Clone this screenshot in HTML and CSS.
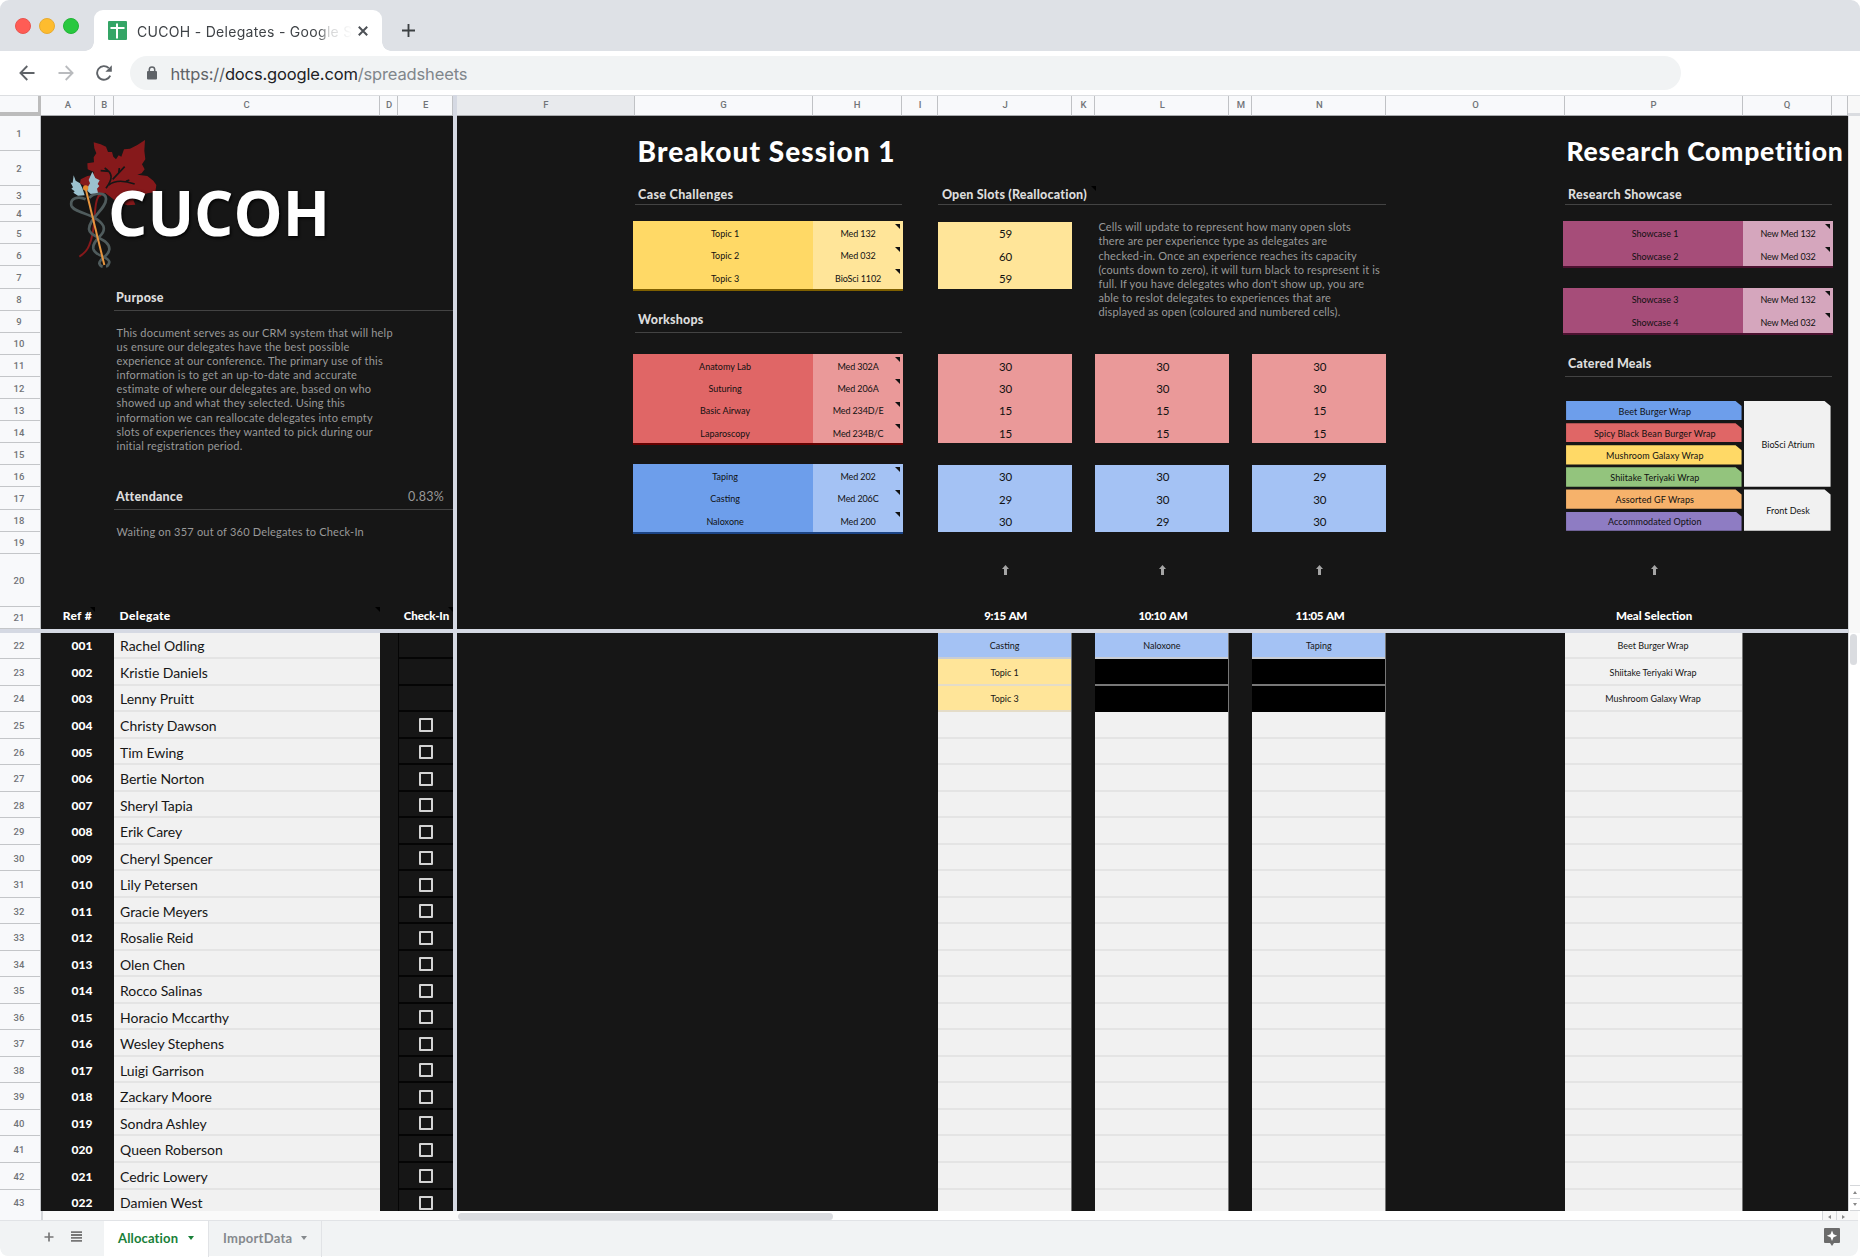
FILE: index.html
```html
<!DOCTYPE html>
<html lang="en">
<head>
<meta charset="utf-8">
<title>CUCOH - Delegates - Google Sheets</title>
<link rel="stylesheet" href="styles.css">
</head>
<body>
<div class="window">
  <header class="tabstrip">
    <div class="lights"><i class="close"></i><i class="min"></i><i class="max"></i></div>
    <div class="tab">
      <svg class="favicon" viewBox="0 0 19 19"><rect width="19" height="19" rx="1" fill="#34a566"/><path d="M9 2.5v15M2.5 7h14" stroke="#fff" stroke-width="2" fill="none"/></svg>
      <span class="tab-title">CUCOH - Delegates - Google S</span>
      <svg class="x" viewBox="0 0 10 10"><path d="M.8.8l8.4 8.4M9.2.8L.8 9.2" stroke="#4d5156" stroke-width="2"/></svg>
    </div>
    <svg class="plus" viewBox="0 0 14 14"><path d="M7 0v14M0 7h14" stroke="#3c4043" stroke-width="2"/></svg>
  </header>
  <nav class="toolbar">
    <svg class="nav" viewBox="0 0 16 16"><path d="M15.5 8H1.5M8.3 1L1.4 8l6.9 7" fill="none" stroke="#5f6368" stroke-width="1.8"/></svg>
    <svg class="nav" viewBox="0 0 16 16"><path d="M.5 8h14M7.7 1l6.9 7-6.9 7" fill="none" stroke="#b9bbbe" stroke-width="1.8"/></svg>
    <svg class="nav" viewBox="0 0 16 16"><path d="M14.2 10.6A6.8 6.8 0 1 1 12.8 3.2" fill="none" stroke="#5f6368" stroke-width="1.9"/><path d="M15.8.3v6.4H9.4z" fill="#5f6368"/></svg>
    <div class="omnibox">
      <svg class="lock" viewBox="0 0 10 14"><path d="M2.3 6V3.6a2.7 2.7 0 0 1 5.4 0V6" fill="none" stroke="#5f6368" stroke-width="1.5"/><rect y="5" width="10" height="8.6" rx="1" fill="#5f6368"/></svg>
      <span class="url"><span>https://</span><b>docs.google.com</b><em>/spreadsheets</em></span>
    </div>
  </nav>

  <main class="sheet">
    <div class="colheads">
      <span class="corner"></span><span>A</span><span>B</span><span>C</span><span>D</span><span>E</span><span></span><span class="sel">F</span><span>G</span><span>H</span><span>I</span><span>J</span><span>K</span><span>L</span><span>M</span><span>N</span><span>O</span><span>P</span><span>Q</span><span></span><span class="track"></span>
    </div>
    <div class="rowheads">
      <span>1</span><span>2</span><span>3</span><span>4</span><span>5</span><span>6</span><span>7</span><span>8</span><span>9</span><span>10</span><span>11</span><span>12</span><span>13</span><span>14</span><span>15</span><span>16</span><span>17</span><span>18</span><span>19</span><span>20</span><span>21</span><span class="gap"></span><span>22</span><span>23</span><span>24</span><span>25</span><span>26</span><span>27</span><span>28</span><span>29</span><span>30</span><span>31</span><span>32</span><span>33</span><span>34</span><span>35</span><span>36</span><span>37</span><span>38</span><span>39</span><span>40</span><span>41</span><span>42</span><span>43</span>
    </div>

    <svg class="logo" viewBox="0 0 870 450">
      <path fill="#86191b" d="M131 37L152 43 168 50 174 66 186 66 190 80 198 88 206 76 214 80 222 58 240 56 262 45 285 30 283 62 286 88 276 103 284 118 275 130 262 134 292 138 310 152 319 165 316 186 292 190 250 210 256 224 232 226 200 215 165 188 150 200 90 160 92 148 112 138 128 136 132 126 113 118 112 100 132 97 131 82 139 70 133 55z"/>
      <path d="M150 192C126 220 142 290 118 345C112 362 100 372 88 380" fill="none" stroke="#86191b" stroke-width="6"/>
      <path d="M168 175C190 145 188 130 164 114M152 122l26 2M188 148L224 110M206 130l2-16M176 165C195 150 225 152 254 162M228 154l10-4" fill="none" stroke="#161616" stroke-width="5"/>
      <path d="M107 208C85 198 60 204 64 226C70 250 140 250 160 288C170 318 126 325 130 356C135 380 176 378 178 396Q176 408 168 409M118 204C130 187 167 185 168 206C170 236 116 265 117 298C118 322 180 325 178 358C176 380 148 384 148 400Q150 408 158 410" fill="none" stroke="#4f5b5c" stroke-width="8"/>
      <path d="M107 176L163 405" stroke="#e8963f" stroke-width="6"/>
      <path fill="#9bc1ce" d="M71 136L77 152 90 160 97 174 104 196 84 197 70 188 74 184 64 176 69 172 62 158 68 158z"/>
      <path fill="#9bc1ce" d="M127 125L136 144 149 151 143 162 148 168 141 176 144 188 122 192 112 182 114 170 120 160 116 150z"/>
      <circle cx="107" cy="174" r="8" fill="#e58a2e"/>
      <text class="wordmark" x="174" y="318" textLength="666" lengthAdjust="spacingAndGlyphs">CUCOH</text>
    </svg>

    <h2 class="h purpose">Purpose</h2>
    <p class="para purpose-text">This document serves as our CRM system that will help<br>us ensure our delegates have the best possible<br>experience at our conference. The primary use of this<br>information is to get an up-to-date and accurate<br>estimate of where our delegates are, based on who<br>showed up and what they selected. Using this<br>information we can reallocate delegates into empty<br>slots of experiences they wanted to pick during our<br>initial registration period.</p>
    <h2 class="h attendance">Attendance <span>0.83%</span></h2>
    <p class="para waiting">Waiting on 357 out of 360 Delegates to Check-In</p>
    <div class="label ref note dark">Ref #</div>
    <div class="label delegate note dark">Delegate</div>
    <div class="label checkin note dark">Check-In</div>

    <h1 class="breakout">Breakout Session 1</h1>
    <h2 class="h cases">Case Challenges</h2>
    <h2 class="h slots"><span class="note dark">Open Slots (Reallocation)</span></h2>
    <div class="card yellow case-card"><span>Topic 1</span><span class="note">Med 132</span><span>Topic 2</span><span class="note">Med 032</span><span>Topic 3</span><span class="note">BioSci 1102</span></div>
    <div class="count yellow c-j r-case"><span>59</span><span>60</span><span>59</span></div>
    <p class="para slots-text">Cells will update to represent how many open slots<br>there are per experience type as delegates are<br>checked-in. Once an experience reaches its capacity<br>(counts down to zero), it will turn black to respresent it is<br>full. If you have delegates who don't show up, you are<br>able to reslot delegates to experiences that are<br>displayed as open (coloured and numbered cells).</p>
    <h2 class="h workshops">Workshops</h2>
    <div class="card red red-card"><span>Anatomy Lab</span><span class="note">Med 302A</span><span>Suturing</span><span class="note">Med 206A</span><span>Basic Airway</span><span class="note">Med 234D/E</span><span>Laparoscopy</span><span class="note">Med 234B/C</span></div>
    <div class="count red c-j r-red"><span>30</span><span>30</span><span>15</span><span>15</span></div>
    <div class="count red c-l r-red"><span>30</span><span>30</span><span>15</span><span>15</span></div>
    <div class="count red c-n r-red"><span>30</span><span>30</span><span>15</span><span>15</span></div>
    <div class="card blue blue-card"><span>Taping</span><span class="note">Med 202</span><span>Casting</span><span class="note">Med 206C</span><span>Naloxone</span><span class="note">Med 200</span></div>
    <div class="count blue c-j r-blue"><span>30</span><span>29</span><span>30</span></div>
    <div class="count blue c-l r-blue"><span>30</span><span>30</span><span>29</span></div>
    <div class="count blue c-n r-blue"><span>29</span><span>30</span><span>30</span></div>

    <svg class="arrow c-j" viewBox="0 0 7 10"><path d="M3.5 0L7 4H5v6H2V4H0z"/></svg>
    <svg class="arrow c-l" viewBox="0 0 7 10"><path d="M3.5 0L7 4H5v6H2V4H0z"/></svg>
    <svg class="arrow c-n" viewBox="0 0 7 10"><path d="M3.5 0L7 4H5v6H2V4H0z"/></svg>
    <svg class="arrow c-p" viewBox="0 0 7 10"><path d="M3.5 0L7 4H5v6H2V4H0z"/></svg>
    <div class="label mid time c-j">9:15 AM</div>
    <div class="label mid time c-l">10:10 AM</div>
    <div class="label mid time c-n">11:05 AM</div>
    <div class="label mid c-p">Meal Selection</div>

    <h1 class="research">Research Competition</h1>
    <h2 class="h showcase">Research Showcase</h2>
    <div class="card plum show-a"><span>Showcase 1</span><span class="note">New Med 132</span><span>Showcase 2</span><span class="note">New Med 032</span></div>
    <div class="card plum show-b"><span>Showcase 3</span><span class="note">New Med 132</span><span>Showcase 4</span><span class="note">New Med 032</span></div>
    <h2 class="h catered">Catered Meals</h2>
    <div class="meals">
      <span class="m-blue">Beet Burger Wrap</span><span class="m-red">Spicy Black Bean Burger Wrap</span><span class="m-yellow">Mushroom Galaxy Wrap</span><span class="m-green">Shiitake Teriyaki Wrap</span><span class="m-orange">Assorted GF Wraps</span><span class="m-purple">Accommodated Option</span>
    </div>
    <div class="places"><span class="atrium">BioSci Atrium</span><span class="desk">Front Desk</span></div>

    <div class="data refs"><span>001</span><span>002</span><span>003</span><span>004</span><span>005</span><span>006</span><span>007</span><span>008</span><span>009</span><span>010</span><span>011</span><span>012</span><span>013</span><span>014</span><span>015</span><span>016</span><span>017</span><span>018</span><span>019</span><span>020</span><span>021</span><span>022</span></div>
    <div class="data names"><span>Rachel Odling</span><span>Kristie Daniels</span><span>Lenny Pruitt</span><span>Christy Dawson</span><span>Tim Ewing</span><span>Bertie Norton</span><span>Sheryl Tapia</span><span>Erik Carey</span><span>Cheryl Spencer</span><span>Lily Petersen</span><span>Gracie Meyers</span><span>Rosalie Reid</span><span>Olen Chen</span><span>Rocco Salinas</span><span>Horacio Mccarthy</span><span>Wesley Stephens</span><span>Luigi Garrison</span><span>Zackary Moore</span><span>Sondra Ashley</span><span>Queen Roberson</span><span>Cedric Lowery</span><span>Damien West</span></div>
    <div class="data checks"><span></span><span></span><span></span><span><i></i></span><span><i></i></span><span><i></i></span><span><i></i></span><span><i></i></span><span><i></i></span><span><i></i></span><span><i></i></span><span><i></i></span><span><i></i></span><span><i></i></span><span><i></i></span><span><i></i></span><span><i></i></span><span><i></i></span><span><i></i></span><span><i></i></span><span><i></i></span><span><i></i></span></div>
    <div class="data picks c-j"><span class="p-blue">Casting</span><span class="p-yellow">Topic 1</span><span class="p-yellow">Topic 3</span><span></span><span></span><span></span><span></span><span></span><span></span><span></span><span></span><span></span><span></span><span></span><span></span><span></span><span></span><span></span><span></span><span></span><span></span><span></span></div>
    <div class="data picks c-l"><span class="p-blue">Naloxone</span><span class="p-black"></span><span class="p-black"></span><span></span><span></span><span></span><span></span><span></span><span></span><span></span><span></span><span></span><span></span><span></span><span></span><span></span><span></span><span></span><span></span><span></span><span></span><span></span></div>
    <div class="data picks c-n"><span class="p-blue">Taping</span><span class="p-black"></span><span class="p-black"></span><span></span><span></span><span></span><span></span><span></span><span></span><span></span><span></span><span></span><span></span><span></span><span></span><span></span><span></span><span></span><span></span><span></span><span></span><span></span></div>
    <div class="data picks c-p"><span>Beet Burger Wrap</span><span>Shiitake Teriyaki Wrap</span><span>Mushroom Galaxy Wrap</span><span></span><span></span><span></span><span></span><span></span><span></span><span></span><span></span><span></span><span></span><span></span><span></span><span></span><span></span><span></span><span></span><span></span><span></span><span></span></div>

    <div class="freeze-h"></div>
    <div class="freeze-v"></div>
    <div class="vscroll-top"></div>
    <div class="vscroll">
      <div class="vthumb"></div>
      <svg class="vbtn" viewBox="0 0 10 26"><path d="M0 .5h10M0 13.5h10M0 25.5h10" stroke="#d5d7da"/><path d="M3 9l2-3 2 3zM3 18l2 3 2-3z" fill="#888"/></svg>
    </div>
  </main>

  <div class="hscroll"><span class="h-left"></span><span class="h-mid"></span><span class="hthumb"></span>
    <svg class="hbtn" viewBox="0 0 36 9"><rect width="36" height="9" fill="#f8f8f8"/><path d="M.5 0v9M14.5 0v9" stroke="#d5d7da"/><path d="M9 4l-3 2 3 2zM20 4l3 2-3 2z" fill="#888"/></svg></div>
  <footer class="sheetbar">
    <svg class="add" viewBox="0 0 10 10"><path d="M5 .5v9M.5 5h9" stroke="#777" stroke-width="1.7"/></svg>
    <svg class="list" viewBox="0 0 11 11"><path d="M0 1.2h11M0 4h11M0 6.9h11M0 9.8h11" stroke="#777" stroke-width="1.8"/></svg>
    <div class="stab active">Allocation<i></i></div>
    <div class="stab">ImportData<i></i></div>
    <svg class="explore" viewBox="0 0 16 18"><path d="M1 0h14a1 1 0 0 1 1 1v13a1 1 0 0 1-1 1h-5l-2 3-2-3H1a1 1 0 0 1-1-1V1a1 1 0 0 1 1-1z" fill="#6b6b6b"/><path d="M8 2.5l1.5 3.7 3.7 1.5-3.7 1.5L8 13 6.5 9.2 2.8 7.7l3.7-1.5z" fill="#fff"/></svg>
  </footer>
</div>
</body>
</html>
```
FILE: styles.css
```css
* { box-sizing: border-box; }
body { margin: 0; background: #fff; font-family: Lato, "Open Sans", sans-serif; }
h1, h2, p { margin: 0; }
.window { width: 1860px; height: 1257px; overflow: hidden; display: flex; flex-direction: column; border-radius: 9px; background: #fff; }

/* browser chrome */
.tabstrip { height: 51px; flex: none; background: #dee1e6; display: flex; align-items: flex-start; }
.lights { display: flex; gap: 8px; padding: 18px 0 0 15px; width: 94px; }
.lights i { width: 16px; height: 16px; border-radius: 50%; border: 1px solid; }
.lights .close { background: #ff5c55; border-color: #e9544e; }
.lights .min { background: #febc2e; border-color: #e8ab30; }
.lights .max { background: #28c83f; border-color: #22b437; }
.tab { position: relative; width: 288px; height: 41px; margin-top: 10px; background: #fff; border-radius: 9px 9px 0 0; display: flex; align-items: center; padding: 0 14px; }
.tab::before, .tab::after { content: ""; position: absolute; bottom: 0; width: 9px; height: 9px; }
.tab::before { left: -9px; background: radial-gradient(circle at 0 0, transparent 8.5px, #fff 9px); }
.tab::after { right: -9px; background: radial-gradient(circle at 100% 0, transparent 8.5px, #fff 9px); }
.favicon { width: 19px; height: 19px; flex: none; }
.tab-title { margin: 3px 2px 0 10px; flex: 1; white-space: nowrap; font: 14px/20px Inter, Roboto, sans-serif; letter-spacing: .3px; color: #3f4347; -webkit-mask-image: linear-gradient(90deg, #000 182px, rgba(0,0,0,.25) 192px, transparent 216px); mask-image: linear-gradient(90deg, #000 182px, rgba(0,0,0,.25) 192px, transparent 216px); }
.x { width: 10px; height: 10px; flex: none; }
.plus { width: 13px; height: 13px; margin: 24px 0 0 20px; }
.toolbar { height: 44px; flex: none; display: flex; align-items: center; padding: 0 0 1px 19px; }
.nav { width: 16px; height: 16px; margin-right: 22.5px; flex: none; }
.omnibox { width: 1551px; height: 34px; border-radius: 17px; background: #f1f3f4; margin-left: -5px; display: flex; align-items: center; padding-left: 17px; }
.lock { width: 10px; height: 14px; }
.url { margin: 2px 0 0 14px; font: 16.5px/24px Inter, Roboto, sans-serif; letter-spacing: -.15px; color: #5f6368; white-space: nowrap; }
.url b { font-weight: 400; color: #202124; }
.url em { font-style: normal; color: #80868b; }

/* spreadsheet grid */
.sheet { height: 1116px; flex: none; overflow: hidden; display: grid; background: #161616; color: #111;
  grid-template-columns: 41px 54px 18.6px 266px 18.9px 54.6px 4px 177.5px 178px 89px 36.8px 133.5px 23.5px 134px 23px 134px 178.2px 178px 89px 16.4px 12px;
  grid-template-rows: 20.5px 35.5px 35px 19px 17.3px repeat(15, 22.1px) 53px 22.4px 3.6px repeat(22, 26.53px); }
.colheads { grid-area: 1 / 1 / 2 / -1; display: grid; grid-template-columns: subgrid; background: #f8f9fb; border-top: 1px solid #dcdee1; }
.colheads span { border-right: 1px solid #c0c2c5; border-bottom: 1px solid #a9abae; display: flex; align-items: center; justify-content: center; font: 500 9.5px Roboto, sans-serif; color: #717478; padding: 0 0 1px 1px; }
.colheads .corner { border-right: 3px solid #bcbcbc; border-bottom: 4px solid #bcbcbc; }
.colheads .sel { background: #e8eaed; }
.colheads .track { background: #f8f8f8; border-right: 0; border-bottom: 3px solid #dadce0; }
.rowheads { grid-area: 2 / 1 / -1 / 2; display: grid; grid-template-rows: subgrid; background: #f8f9fb; border-right: 1px solid #c0c2c5; }
.rowheads span { border-bottom: 1px solid #c4c6c9; display: flex; align-items: center; justify-content: center; font: 500 9.5px Roboto, sans-serif; color: #717478; padding: 1px 2px 0 0; }

.c-j { grid-column: 12; } .c-l { grid-column: 14; } .c-n { grid-column: 16; } .c-p { grid-column: 18; }
.logo { grid-area: 2 / 2 / 9 / 7; width: 290px; height: 150px; margin: 14.5px 0 0 9px; }
.wordmark { font: 700 186px "Open Sans", sans-serif; fill: #fff; filter: drop-shadow(3px 4px 4px #000); }

h1 { font-size: 26px; font-weight: 900; color: #fff; white-space: nowrap; align-self: center; padding: 1px 0 0 4px; letter-spacing: .88px; }
.breakout { grid-area: 2 / 9 / 4 / 14; padding-left: 3px; font-size: 28px; letter-spacing: 1.05px; }
.research { grid-area: 2 / 18 / 4 / 21; padding-left: 2px; font-size: 26.5px; letter-spacing: .75px; }
.h { font-size: 12.5px; font-weight: 900; letter-spacing: .2px; color: #dcdcdc; border-bottom: 1px solid #434343; padding: 0 0 2px 3.5px; display: flex; align-items: center; white-space: nowrap; }
.purpose { grid-area: 9 / 4 / 10 / 7; padding: 0 0 4px 2.5px; }
.attendance { grid-area: 18 / 4 / 19 / 7; padding: 0 9px 3px 2.5px; justify-content: space-between; }
.attendance span { font-weight: 400; font-size: 12.5px; letter-spacing: .25px; color: #999; }
.cases { grid-area: 4 / 9 / 5 / 11; letter-spacing: .33px; }
.slots { grid-area: 4 / 12 / 5 / 17; }
.slots .note::after { right: -9px; top: -1px; }
.workshops { grid-area: 10 / 9 / 11 / 11; padding-bottom: 4px; }
.showcase { grid-area: 4 / 18 / 5 / 20; letter-spacing: .27px; }
.catered { grid-area: 12 / 18 / 13 / 20; padding-bottom: 3px; }
.para { font-size: 11px; line-height: 14.15px; letter-spacing: .16px; color: #999; white-space: nowrap; padding-left: 3px; }
.purpose-text { grid-area: 10 / 4 / 18 / 7; padding-top: 15px; letter-spacing: .2px; }
.waiting { grid-area: 19 / 4 / 21 / 7; align-self: center; letter-spacing: .2px; padding-top: 1px; }
.slots-text { grid-area: 6 / 14 / 12 / 17; margin-top: -2px; }

.note { position: relative; }
.note::after { content: ""; position: absolute; right: 3px; top: 3px; border-style: solid; border-width: 0 5px 5px 0; border-color: transparent #111 transparent transparent; }
.dark::after { right: 0; top: 0; border-right-color: #000; }
.card { display: grid; grid-template-columns: 2fr 1fr; margin: -1px -1.5px -2px -1.5px; border-bottom: 2px solid; font-size: 9px; z-index: 1; }
.card span, .count span { display: flex; align-items: center; justify-content: center; padding-top: 2px; }
.card span { padding-left: 4px; }
.card .note { padding-left: 0; letter-spacing: -.12px; }
.count { display: grid; font-size: 11.5px; margin-top: -.5px; }
.count span { padding-left: 1px; }
.case-card { grid-area: 6 / 9 / 9 / 11; }
.red-card { grid-area: 12 / 9 / 16 / 11; }
.blue-card { grid-area: 17 / 9 / 20 / 11; }
.show-a { grid-area: 6 / 18 / 8 / 20; }
.show-b { grid-area: 9 / 18 / 11 / 20; }
.r-case { grid-row: 6 / 9; } .r-red { grid-row: 12 / 16; } .r-blue { grid-row: 17 / 20; }
.yellow { background: #ffd966; border-color: #7f6000; }
.card.yellow .note, .count.yellow { background: #ffe599; }
.red { background: #e06666; border-color: #660000; }
.card.red .note, .count.red { background: #ea9999; }
.blue { background: #6d9eeb; border-color: #1c4587; }
.card.blue .note, .count.blue { background: #a4c2f4; }
.plum { background: #a64d79; border-color: #4c1130; }
.card.plum .note { background: #d5a6bd; }

.meals { grid-area: 14 / 18 / 20 / 19; display: grid; grid-template-rows: subgrid; padding: 0 1px 0 1.5px; letter-spacing: .1px; }
.meals span, .places span { position: relative; display: flex; align-items: center; justify-content: center; font-size: 9px; margin: 2px 0 .8px; padding: 1px 0 0 2px; clip-path: polygon(0 0, calc(100% - 6px) 0, 100% 5px, 100% 100%, 0 100%); }
.m-blue { background: #6d9eeb; } .m-red { background: #e06666; } .m-yellow { background: #ffd966; }
.m-green { background: #93c47d; } .m-orange { background: #f6b26b; } .m-purple { background: #8e7cc3; }
.places { grid-area: 14 / 19 / 20 / 20; display: grid; grid-template-rows: subgrid; padding: 0 1px; }
.places span { background: #f1f1f1; }
.atrium { grid-row: 1 / 5; } .desk { grid-row: 5 / 7; }

.arrow { grid-row: 21; width: 7px; height: 10px; justify-self: center; margin: 11.5px 0 0 1px; fill: #a5a5a5; }
.label { grid-row: 22; color: #fff; font-size: 12px; font-weight: 900; letter-spacing: .34px; display: flex; align-items: center; padding-bottom: 5px; white-space: nowrap; }
.label.mid { justify-content: center; font-size: 11.5px; letter-spacing: 0; padding-left: 1px; }
.label.time { letter-spacing: -.4px; word-spacing: 1px; }
.ref { grid-column: 2; justify-content: flex-end; padding-right: 3px; }
.delegate { grid-column: 4; padding-left: 6px; }
.checkin { grid-column: 6; justify-content: flex-end; padding-right: 4px; font-size: 11.5px; letter-spacing: -.1px; }

.data { grid-row: 24 / -1; display: grid; grid-template-rows: subgrid; }
.data span { display: flex; align-items: center; padding-top: 2px; }
.refs { grid-column: 2; color: #fff; font-size: 12px; font-weight: 900; }
.refs span { justify-content: flex-end; padding: 0 2.5px 0 0; }
.names { grid-column: 4; font-size: 14px; color: #161616; letter-spacing: -.06px; }
.names span { background: #f1f1f1; border-bottom: 2px solid #e4e4e4; padding-left: 6.5px; }
.checks { grid-column: 6; }
.checks span { justify-content: center; border-bottom: 2px solid #050505; border-left: 1px solid #050505; padding-right: 1px; }
.checks i { width: 14px; height: 14px; border: 2px solid #d4d4d4; border-radius: 1px; }
.picks { font-size: 9px; color: #161616; border-right: 1px solid #777; }
.picks span { background: #f1f1f1; border-bottom: 2px solid #e4e4e4; justify-content: center; }
.picks .p-blue { background: #a4c2f4; border-color: #c9cdd4; }
.picks .p-yellow { background: #ffe599; border-color: #e4dcc8; }
.picks .p-black { background: #000; border-color: #777; }
.picks .p-black + .p-black { border-color: #000; }
.freeze-h { grid-area: 23 / 1 / 24 / 21; background: #d5d9e3; z-index: 2; }
.freeze-v { grid-area: 1 / 7 / -1 / 8; background: #d5d9e3; z-index: 2; }
.vscroll-top { grid-area: 2 / 21 / 24 / 22; background: #f8f8f8; border-left: 1px solid #d5d7da; }
.vscroll { grid-area: 24 / 21 / -1 / 22; height: 579px; background: #fff; border-left: 1px solid #d5d7da; display: flex; flex-direction: column; justify-content: space-between; padding: 1px 2px 1px 1px; }
.vthumb { width: 7px; height: 31px; border-radius: 4px; background: #dadce0; }
.vbtn { width: 10px; height: 26px; }

.hscroll { height: 9px; flex: none; display: flex; align-items: stretch; }
.h-left { width: 43px; background: #f8f9fb; border-right: 2px solid #d5d7da; }
.h-mid { width: 415px; background: #fafafa; }
.hthumb { width: 375px; height: 7px; margin-top: 2px; border-radius: 4px; background: #dadce0; }
.hbtn { width: 36px; height: 9px; margin: 0 2px 0 auto; }
.sheetbar { height: 36px; flex: none; margin-right: 2px; background: #f1f3f4; border-top: 1px solid #e1e3e6; border-radius: 0 0 8px 8px; display: flex; align-items: center; }
.add { width: 10px; height: 10px; margin: -4px 0 0 44px; }
.list { width: 11px; height: 11px; margin: -4px 0 0 17px; }
.stab { height: 36px; display: flex; align-items: center; justify-content: space-between; padding: 0 14px 2px 14px; width: 113px; font-size: 13px; font-weight: 700; letter-spacing: .25px; color: #85898d; border-right: 1px solid #e1e3e6; }
.stab.active { width: 105px; margin-left: 22px; background: #fff; color: #188038; letter-spacing: .15px; }
.stab i { border: 3.5px solid transparent; border-top: 4px solid currentColor; border-bottom: 0; }
.explore { width: 16px; height: 18px; margin: -4px 18px 0 auto; }
```
